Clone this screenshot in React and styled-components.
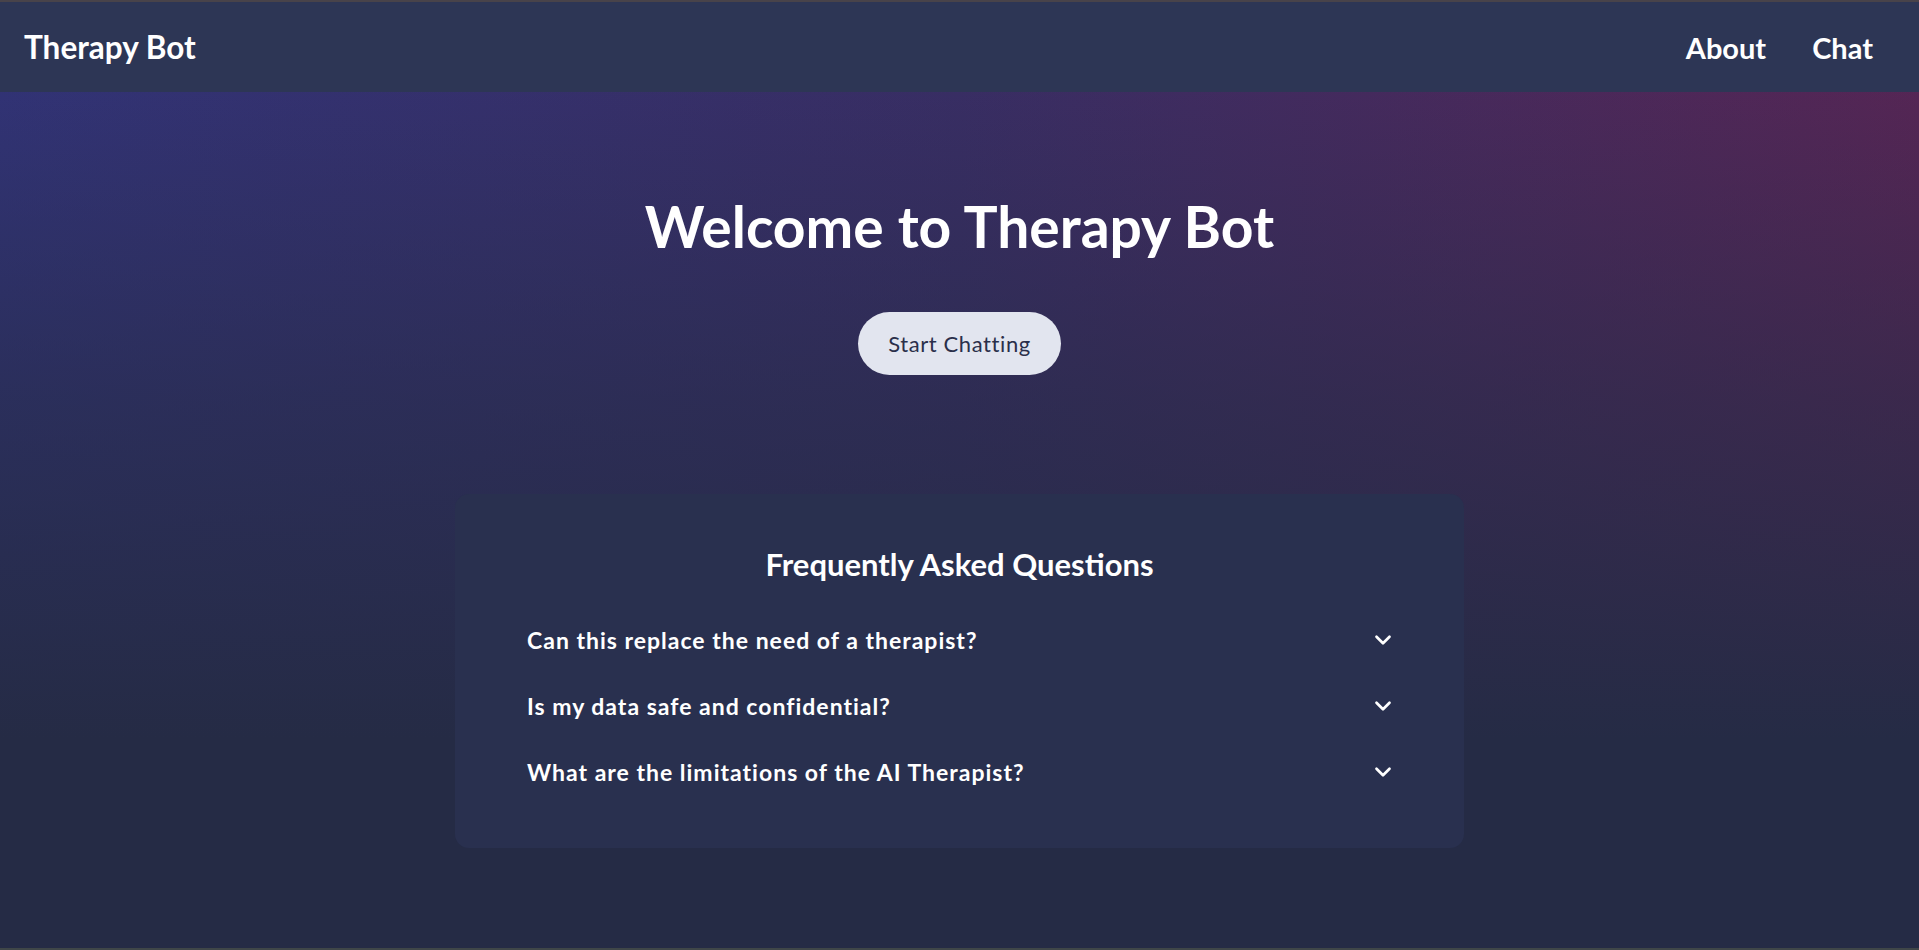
import React from 'react'
import styled, { createGlobalStyle } from 'styled-components'
import { ChevronDown } from 'lucide-react'

const GlobalStyle = createGlobalStyle`
    html, body {
        margin: 0;
        padding: 0;
        background: #252b45;
    }
    * {
        box-sizing: border-box;
    }
    body {
        font-family: Lato, "Open Sans", "Liberation Sans", sans-serif;
        color: #fff;
    }
`

const Page = styled.div`
    display: flex;
    flex-direction: column;
    height: 100vh;
    width: 100%;
    border-top: 2px solid #48434a;
    border-bottom: 2px solid #3f4648;
    background:
        linear-gradient(180deg, rgba(37, 43, 69, 0) 0%, rgba(37, 43, 69, 0.6) 42%, #252b45 78%),
        linear-gradient(90deg, #33347c 0%, #3b2e68 50%, #5c2557 100%);
    background-color: #252b45;
`

const Nav = styled.nav`
    display: flex;
    align-items: center;
    justify-content: space-between;
    height: 90px;
    padding: 0 46px 0 24px;
    background-color: #2d3655;
    flex-shrink: 0;
`

const Brand = styled.div`
    font-size: 31.5px;
    font-weight: 700;
    color: #fff;
`

const Links = styled.div`
    display: flex;
    align-items: center;
    gap: 46px;
`

const NavLink = styled.a`
    font-size: 29px;
    font-weight: 700;
    color: #fff;
    text-decoration: none;
    cursor: pointer;
`

const Main = styled.main`
    display: flex;
    flex-direction: column;
    align-items: center;
    padding-top: 98px;
    flex: 1;
`

const Title = styled.h1`
    margin: 0;
    font-size: 57px;
    line-height: 72px;
    font-weight: 700;
    color: #fff;
`

const StartButton = styled.button`
    margin-top: 50px;
    height: 63px;
    padding: 0 30px;
    border: none;
    border-radius: 999px;
    background-color: #e2e5ef;
    color: #2a2f4a;
    font-family: inherit;
    font-size: 22px;
    letter-spacing: 0.6px;
    cursor: pointer;
`

const FaqCard = styled.section`
    margin-top: 119px;
    width: 1009px;
    padding: 48px 40px 43px;
    border-radius: 14px;
    background-color: #29304f;
`

const FaqTitle = styled.h2`
    margin: 0 0 20px;
    font-size: 31px;
    line-height: 45px;
    font-weight: 700;
    text-align: center;
    color: #fff;
`

const Question = styled.div`
    display: flex;
    align-items: center;
    justify-content: space-between;
    height: 66px;
    padding: 0 28px 0 32px;
    font-size: 23px;
    letter-spacing: 1px;
    font-weight: 700;
    color: #fff;
    cursor: pointer;
`

const questions = [
    'Can this replace the need of a therapist?',
    'Is my data safe and confidential?',
    'What are the limitations of the AI Therapist?'
]

export default function App() {
    return (
        <>
            <GlobalStyle />
            <Page>
                <Nav>
                    <Brand>Therapy Bot</Brand>
                    <Links>
                        <NavLink>About</NavLink>
                        <NavLink>Chat</NavLink>
                    </Links>
                </Nav>
                <Main>
                    <Title>Welcome to Therapy Bot</Title>
                    <StartButton>Start Chatting</StartButton>
                    <FaqCard>
                        <FaqTitle>Frequently Asked Questions</FaqTitle>
                        {questions.map((q) => (
                            <Question key={q}>
                                <span>{q}</span>
                                <ChevronDown size={26} strokeWidth={2.5} color="#fff" />
                            </Question>
                        ))}
                    </FaqCard>
                </Main>
            </Page>
        </>
    )
}
